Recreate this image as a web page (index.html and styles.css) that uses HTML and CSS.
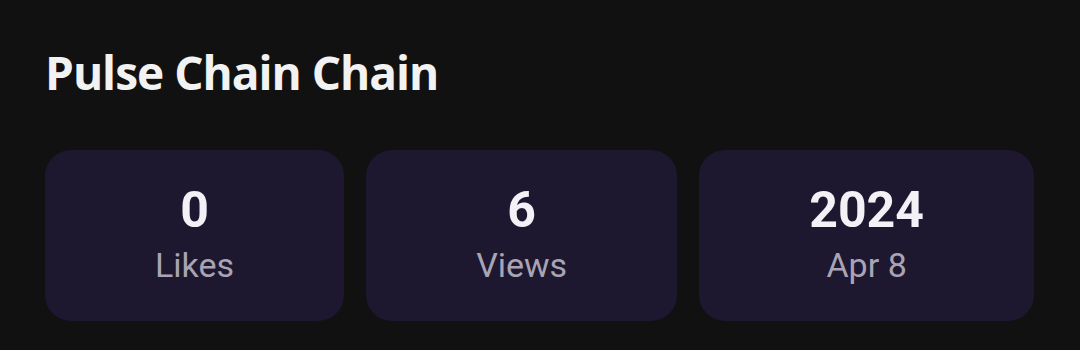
FILE: index.html
```html
<!DOCTYPE html>
<html>
<head>
<meta charset="utf-8">
<link rel="stylesheet" href="styles.css">
</head>
<body>
<main class="page">
  <h1 class="title">Pulse Chain Chain</h1>
  <section class="stats">
    <div class="card">
      <div class="num">0</div>
      <div class="label">Likes</div>
    </div>
    <div class="card">
      <div class="num">6</div>
      <div class="label">Views</div>
    </div>
    <div class="card">
      <div class="num">2024</div>
      <div class="label">Apr 8</div>
    </div>
  </section>
</main>
</body>
</html>
```

FILE: styles.css
```css
html, body {
  margin: 0;
  padding: 0;
  background: #111111;
}
.page {
  padding: 44px 46px 0 45px;
  display: flex;
  flex-direction: column;
}
.title {
  margin: 0 0 50px 0;
  font-family: "Open Sans", sans-serif;
  font-weight: 700;
  font-size: 46px;
  line-height: 56px;
  letter-spacing: -1px;
  color: #f2f2f2;
}
.stats {
  display: flex;
  gap: 22px;
}
.card {
  flex: 1 1 auto;
  background: #1e1730;
  border-radius: 26px;
  padding: 31px 0 36px;
  display: flex;
  flex-direction: column;
  align-items: center;
  gap: 6px;
  font-family: Roboto, sans-serif;
}
.num {
  font-size: 50px;
  line-height: 58px;
  font-weight: 700;
  color: #f3f1f6;
}
.label {
  font-size: 34px;
  line-height: 40px;
  color: #a9a4b4;
}
```
